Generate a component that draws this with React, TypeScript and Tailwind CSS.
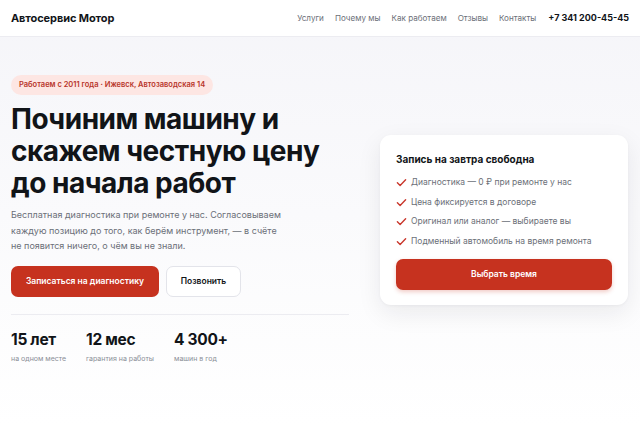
import React from 'react';

const navItems = ['Услуги', 'Почему мы', 'Как работаем', 'Отзывы', 'Контакты'];

const perks = [
  'Диагностика — 0 ₽ при ремонте у нас',
  'Цена фиксируется в договоре',
  'Оригинал или аналог — выбираете вы',
  'Подменный автомобиль на время ремонта',
];

const stats = [
  { value: '15 лет', label: 'на одном месте' },
  { value: '12 мес', label: 'гарантия на работы' },
  { value: '4 300+', label: 'машин в год' },
];

function Check() {
  return (
    <svg width="11" height="11" viewBox="0 0 24 24" fill="none" className="shrink-0 mt-[1px]">
      <path d="M3 12.5l6 6L21 6" stroke="#c9372c" strokeWidth="3" strokeLinecap="round" strokeLinejoin="round" />
    </svg>
  );
}

export default function App() {
  return (
    <div className="w-[640px] h-[426px] overflow-hidden bg-gradient-to-b from-[#f5f5f9] to-white font-['Inter',sans-serif] text-[#111418]">
      {/* Header */}
      <header className="h-[37px] bg-white border-b border-[#ececf1] flex items-center justify-between px-[11px]">
        <span className="text-[11px] font-bold tracking-[-0.1px]">Автосервис Мотор</span>
        <div className="flex items-center">
          <nav className="flex gap-[11px] text-[8.1px] text-[#6b6f78]">
            {navItems.map(n => (
              <span key={n}>{n}</span>
            ))}
          </nav>
          <span className="ml-[12px] text-[9px] font-bold">+7 341 200-45-45</span>
        </div>
      </header>

      <main className="flex pl-[11px] pr-[12px]">
        {/* Left column */}
        <section className="w-[338px] pt-[38px]">
          <div className="flex w-fit h-[20px] items-center rounded-full bg-[#fde6e3] px-[8px] text-[7.5px] font-semibold text-[#b8352a]">
            Работаем с 2011 года · Ижевск, Автозаводская 14
          </div>
          <h1 className="mt-[8px] text-[28px] font-bold leading-[32px] tracking-[-0.5px]">
            Починим машину и<br />скажем честную цену<br />до начала работ
          </h1>
          <p className="mt-[8px] w-[276px] text-[9px] leading-[15.5px] text-[#6b6f78]">
            Бесплатная диагностика при ремонте у нас. Согласовываем каждую позицию до того, как берём инструмент, — в счёте не появится ничего, о чём вы не знали.
          </p>
          <div className="mt-[12px] flex gap-[7px]">
            <button className="h-[31px] w-[148px] rounded-[7px] bg-[#c6321f] text-[8.5px] font-semibold text-white">
              Записаться на диагностику
            </button>
            <button className="h-[31px] w-[75px] rounded-[7px] border border-[#e3e4ea] bg-white text-[8.5px] font-semibold">
              Позвонить
            </button>
          </div>
          <div className="mt-[17px] border-t border-[#ececf1]" />
          <div className="mt-[15px] flex gap-[20px]">
            {stats.map(s => (
              <div key={s.value}>
                <div className="text-[15.5px] font-bold leading-[20px] tracking-[-0.3px]">{s.value}</div>
                <div className="mt-[4px] text-[7px] text-[#8a8e97]">{s.label}</div>
              </div>
            ))}
          </div>
        </section>

        {/* Right card */}
        <aside className="ml-[31px] mt-[98px] h-[170px] w-[248px] rounded-[11px] bg-white px-[16px] pt-[17px] shadow-[0_8px_24px_rgba(20,24,40,0.08),0_1px_3px_rgba(20,24,40,0.04)]">
          <div className="text-[10px] font-bold">Запись на завтра свободна</div>
          <ul className="mt-[9px] flex flex-col gap-[7.5px]">
            {perks.map(p => (
              <li key={p} className="flex items-start gap-[4px] text-[8.5px] leading-[12px] text-[#6b6f78]">
                <Check />
                {p}
              </li>
            ))}
          </ul>
          <button className="mt-[12px] h-[31px] w-full rounded-[7px] bg-[#c6321f] text-[8.5px] font-semibold text-white shadow-[0_2px_4px_rgba(198,50,31,0.25)]">
            Выбрать время
          </button>
        </aside>
      </main>
    </div>
  );
}
